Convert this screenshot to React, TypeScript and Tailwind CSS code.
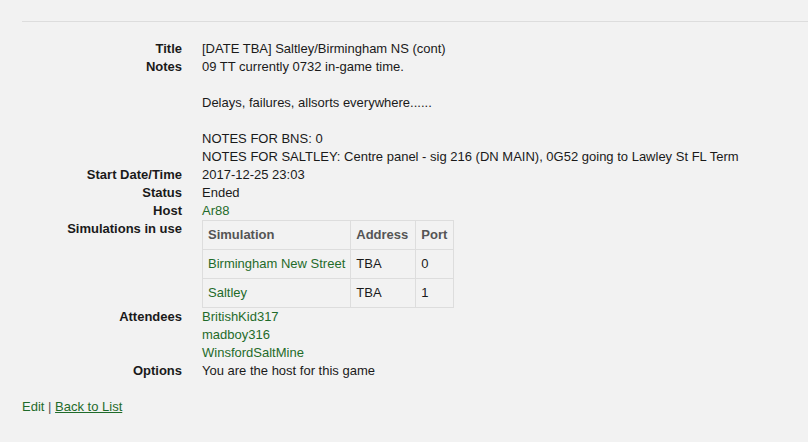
import React from "react";

type Row = { label: string; value: React.ReactNode };

const link = "text-[#1f6b2a] hover:underline";

const sims = [
  { name: "Birmingham New Street", address: "TBA", port: "0" },
  { name: "Saltley", address: "TBA", port: "1" },
];

const attendees = ["BritishKid317", "madboy316", "WinsfordSaltMine"];

export default function App() {
  const rows: Row[] = [
    { label: "Title", value: "[DATE TBA] Saltley/Birmingham NS (cont)" },
    {
      label: "Notes",
      value: (
        <>
          09 TT currently 0732 in-game time.
          <br />
          <br />
          Delays, failures, allsorts everywhere......
          <br />
          <br />
          NOTES FOR BNS: 0
          <br />
          NOTES FOR SALTLEY: Centre panel - sig 216 (DN MAIN), 0G52 going to Lawley St FL Term
        </>
      ),
    },
    { label: "Start Date/Time", value: "2017-12-25 23:03" },
    { label: "Status", value: "Ended" },
    { label: "Host", value: <a className={link}>Ar88</a> },
    {
      label: "Simulations in use",
      value: (
        <table className="border-collapse">
          <thead>
            <tr>
              <th className="border border-[#dddddd] px-[5px] py-[5px] text-left font-bold text-[#555555]">Simulation</th>
              <th className="border border-[#dddddd] pl-[5px] pr-[7px] py-[5px] text-left font-bold text-[#555555]">Address</th>
              <th className="border border-[#dddddd] pl-[5px] pr-[6px] py-[5px] text-left font-bold text-[#555555]">Port</th>
            </tr>
          </thead>
          <tbody>
            {sims.map((s) => (
              <tr key={s.name}>
                <td className="border border-[#dddddd] px-[5px] py-[5px]">
                  <a className={link}>{s.name}</a>
                </td>
                <td className="border border-[#dddddd] px-[5px] py-[5px]">{s.address}</td>
                <td className="border border-[#dddddd] px-[5px] py-[5px]">{s.port}</td>
              </tr>
            ))}
          </tbody>
        </table>
      ),
    },
    {
      label: "Attendees",
      value: (
        <div className="flex flex-col">
          {attendees.map((a) => (
            <a key={a} className={link}>
              {a}
            </a>
          ))}
        </div>
      ),
    },
    { label: "Options", value: "You are the host for this game" },
  ];

  return (
    <div className="min-h-screen bg-[#f2f2f2] font-['Liberation_Sans',Arial,sans-serif] text-[13px] leading-[18px] text-[#1a1a1a]">
      <div className="pl-[22px] pt-[21px]">
        <hr className="border-0 border-t border-[#dddddd] mb-[18px]" />
        <dl className="grid grid-cols-[160px_1fr] gap-x-5">
          {rows.map((r) => (
            <React.Fragment key={r.label}>
              <dt className="text-right font-bold whitespace-nowrap">{r.label}</dt>
              <dd>{r.value}</dd>
            </React.Fragment>
          ))}
        </dl>
        <p className="mt-[18px]">
          <a className={link}>Edit</a> <span className="text-[#555555]">|</span>{" "}
          <a className="text-[#1f6b2a] underline">Back to List</a>
        </p>
      </div>
    </div>
  );
}
